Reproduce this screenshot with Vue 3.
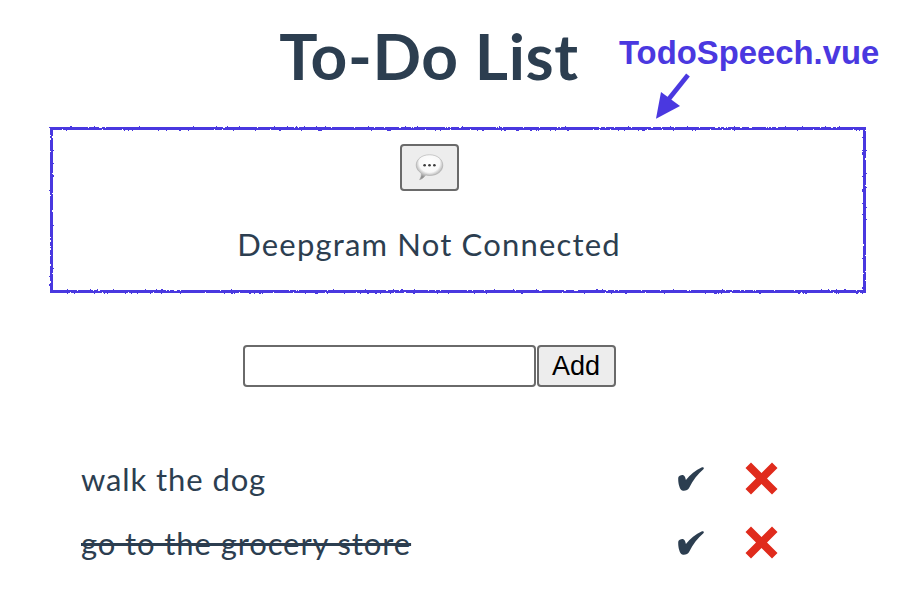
<script setup>
const todos = [
  { text: 'walk the dog', done: false },
  { text: 'go to the grocery store', done: true },
]
</script>

<template>
  <main class="page">
    <svg class="defs" width="0" height="0" aria-hidden="true">
      <defs>
        <filter id="rough" x="-2%" y="-5%" width="104%" height="110%">
          <feTurbulence type="fractalNoise" baseFrequency="0.35" numOctaves="2" seed="4" result="n" />
          <feDisplacementMap in="SourceGraphic" in2="n" scale="2.6" xChannelSelector="R" yChannelSelector="G" />
          <feGaussianBlur stdDeviation="0.45" />
        </filter>
      </defs>
    </svg>

    <header class="head">
      <h1 class="title">To-Do List</h1>
      <div class="note">
        <span class="note-label">TodoSpeech.vue</span>
        <svg class="note-arrow" width="40" height="50" viewBox="0 0 40 50">
          <path d="M35 3 L15 28" stroke="#4a38e0" stroke-width="4.7" fill="none" />
          <path d="M3 46.7 L8 20 L27 34 Z" fill="#4a38e0" />
        </svg>
      </div>
    </header>

    <section class="speech">
      <div class="speech-edge"></div>
      <button class="mic" type="button" aria-label="Speak">
        <svg width="31" height="31" viewBox="0 0 28 28">
          <defs>
            <radialGradient id="bub" cx="50%" cy="32%" r="62%">
              <stop offset="0%" stop-color="#ffffff" />
              <stop offset="62%" stop-color="#f8f8f8" />
              <stop offset="100%" stop-color="#8f8f8f" />
            </radialGradient>
          </defs>
          <path d="M14 2.5 C21 2.5 26 6.6 26 12 C26 17.4 21 21.2 14.5 21.2 C13 21.2 11.8 21 10.6 20.7 C9.4 22.6 7.4 24.4 5 25 C6.2 23.4 6.8 21.2 6.6 19.2 C3.8 17.4 2 14.9 2 12 C2 6.6 7 2.5 14 2.5 Z" fill="url(#bub)" stroke="#a5a5a5" stroke-width="0.5" />
          <circle cx="9.6" cy="12" r="1.2" fill="#3c3c3c" />
          <circle cx="14" cy="12" r="1.2" fill="#3c3c3c" />
          <circle cx="18.4" cy="12" r="1.2" fill="#3c3c3c" />
        </svg>
      </button>
      <p class="status">Deepgram Not Connected</p>
    </section>

    <form class="add" @submit.prevent>
      <input class="add-input" type="text" />
      <button class="add-btn" type="submit">Add</button>
    </form>

    <ul class="list">
      <li v-for="todo in todos" :key="todo.text" class="item">
        <div class="item-text"><span :class="{ done: todo.done }">{{ todo.text }}</span></div>
        <svg class="check" width="26" height="24" viewBox="0 0 26 24">
          <path d="M0.3 10.5 C0.6 8.8 3.6 7.6 5.4 8.2 C6.8 8.8 7.5 11 7.9 13 C12 7.8 17.5 3 24 0.2 C25.6 -0.2 26.4 1.2 25.4 2.2 C20 6.8 15 13 11.2 20.8 C10.2 23.2 6.6 24.4 4.2 23.6 C1.2 22.4 -0.2 14.5 0.3 10.5 Z" fill="#2c3e50" />
        </svg>
        <svg class="cross" width="33" height="33" viewBox="0 0 33 33">
          <path d="M0.5 6 L6 0.5 L16.5 11 L27 0.5 L32.5 6 L22 16.5 L32.5 27 L27 32.5 L16.5 22 L6 32.5 L0.5 27 L11 16.5 Z" fill="#e02b1c" />
        </svg>
      </li>
    </ul>
  </main>
</template>

<style>
body { margin: 0; background: #fff; }
</style>

<style scoped>
.page {
  width: 900px;
  height: 612px;
  overflow: hidden;
  box-sizing: border-box;
  font-family: Lato, "Open Sans", sans-serif;
  color: #2c3e50;
}
.defs { position: absolute; }
.head {
  display: flex;
  height: 127px;
  box-sizing: border-box;
  padding-top: 21px;
}
.title {
  width: 858px;
  margin: 0;
  text-align: center;
  font-size: 64px;
  line-height: 70px;
  font-weight: 700;
  letter-spacing: 0.6px;
  flex: none;
}
.note {
  position: absolute;
  left: 619px;
  top: 34px;
}
.note-label {
  display: block;
  font-family: "Liberation Sans", Arial, sans-serif;
  font-weight: 700;
  font-size: 32.85px;
  line-height: 38px;
  color: #4a38e0;
  white-space: nowrap;
}
.note-arrow {
  position: absolute;
  left: 34px;
  top: 38px;
}
.speech {
  position: relative;
  width: 816px;
  height: 166px;
  margin-left: 50px;
  box-sizing: border-box;
  padding: 17px 58px 0 0;
  display: flex;
  flex-direction: column;
  align-items: center;
}
.speech-edge {
  position: absolute;
  inset: 0;
  border: 3px solid #4a38e0;
  filter: url(#rough);
}
.mic {
  width: 59px;
  height: 47px;
  padding: 0;
  display: flex;
  align-items: center;
  justify-content: center;
  background: #ededed;
  border: 2px solid #6a6a6a;
  border-radius: 4px;
}
.status {
  margin: 34px 0 0;
  font-size: 31px;
  line-height: 38px;
  font-weight: 400;
  letter-spacing: 1.18px;
  white-space: nowrap;
}
.add {
  display: flex;
  justify-content: center;
  gap: 1px;
  width: 858px;
  margin-top: 52px;
}
.add-input {
  width: 293px;
  height: 42px;
  box-sizing: border-box;
  border: 2px solid #6a6a6a;
  border-radius: 4px;
  background: #fff;
  padding: 0;
}
.add-btn {
  width: 79px;
  height: 42px;
  padding: 0;
  box-sizing: border-box;
  background: #ededed;
  border: 2px solid #6a6a6a;
  border-radius: 4px;
  font-family: "Liberation Sans", Arial, sans-serif;
  font-size: 27px;
  color: #000;
}
.list {
  list-style: none;
  margin: 59.5px 0 0;
  padding: 0 0 0 81px;
}
.item {
  display: flex;
  align-items: center;
  height: 64px;
}
.item-text {
  width: 597px;
  flex: none;
  font-size: 31px;
  line-height: 38px;
  letter-spacing: 0.9px;
  white-space: nowrap;
}
.done {
  text-decoration: line-through;
  text-decoration-thickness: 3px;
}
.check { flex: none; margin-right: 41px; }
.cross { flex: none; }
</style>
